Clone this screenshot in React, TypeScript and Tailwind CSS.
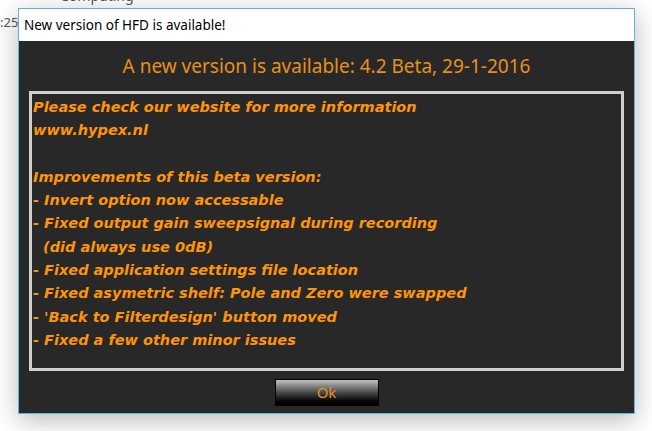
import { memo } from 'react';

const notes = [
  'Please check our website for more information',
  'www.hypex.nl',
  '',
  'Improvements of this beta version:',
  '- Invert option now accessable',
  '- Fixed output gain sweepsignal during recording',
  '  (did always use 0dB)',
  '- Fixed application settings file location',
  '- Fixed asymetric shelf: Pole and Zero were swapped',
  "- 'Back to Filterdesign' button moved",
  '- Fixed a few other minor issues',
];

const UpdateDialog = memo(function UpdateDialog() {
  return (
    <div className="absolute left-[18px] top-[8px] w-[617px] h-[406px] flex flex-col border border-[#5fb3ef] bg-[#282828] shadow-[0_6px_24px_rgba(0,0,0,0.28)]">
      {/* Title bar */}
      <div className="h-[32px] bg-white flex items-center pl-[5px] text-[13.5px] text-black font-['Noto_Sans',sans-serif]">
        New version of HFD is available!
      </div>

      {/* Heading */}
      <div className="h-[50px] flex items-center justify-center text-[19px] text-[#e8901c] font-['Noto_Sans',sans-serif]">
        A new version is available: 4.2 Beta, 29-1-2016
      </div>

      {/* Release notes */}
      <div className="mx-[10px] h-[280px] border-[3px] border-[#cfcfcf] pl-[1px] pt-[2px]">
        {notes.map((line, i) => (
          <div
            key={i}
            className="h-[23.3px] whitespace-pre text-[14.5px] leading-[23px] font-bold italic text-[#ff9408] font-['DejaVu_Sans',sans-serif]"
          >
            {line}
          </div>
        ))}
      </div>

      {/* Footer */}
      <div className="flex-1 flex items-start justify-center pt-[8px]">
        <button className="w-[104px] h-[27px] border border-black bg-gradient-to-b from-[#c4c4c4] via-[#4a4a4a] to-black text-[15px] text-[#e8901c] font-['Noto_Sans',sans-serif]">
          Ok
        </button>
      </div>
    </div>
  );
});

export default function App() {
  return (
    <div className="relative w-[652px] h-[431px] bg-white overflow-hidden font-['Noto_Sans',sans-serif]">
      <div className="absolute left-[60px] top-[-15px] text-[14px] text-[#555]">Computing</div>
      <div className="absolute left-0 top-[13px] text-[13px] text-[#555]">:25</div>
      <UpdateDialog />
    </div>
  );
}
